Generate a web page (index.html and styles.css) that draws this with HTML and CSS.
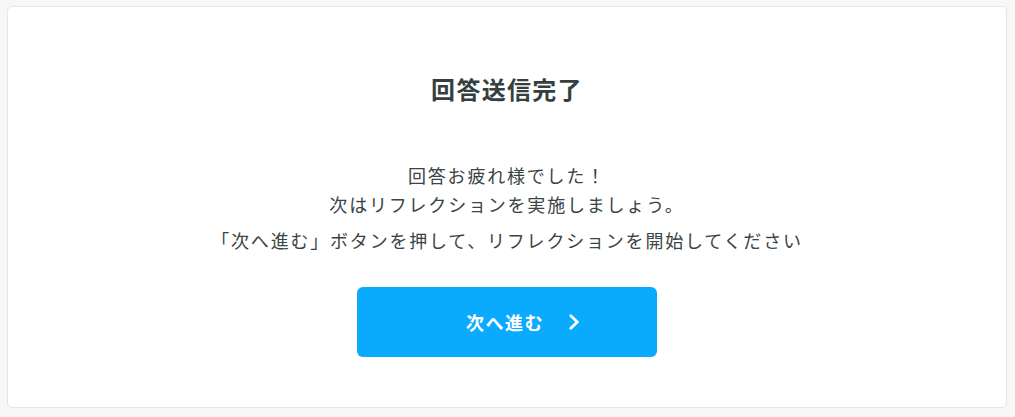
FILE: index.html
```html
<!DOCTYPE html>
<html lang="ja">
<head>
<meta charset="utf-8">
<link rel="stylesheet" href="styles.css">
</head>
<body>
<main class="card">
  <h1 class="title">回答送信完了</h1>
  <div class="message">
    <p class="lead">回答お疲れ様でした！<br>次はリフレクションを実施しましょう。</p>
    <p class="note">「次へ進む」ボタンを押して、リフレクションを開始してください</p>
  </div>
  <button class="next" type="button">
    <span class="label">次へ進む</span>
    <svg class="chev" width="12" height="16" viewBox="0 0 12 16" aria-hidden="true"><path d="M2.8 1.8 L9.3 8 L2.8 14.2" fill="none" stroke="#fff" stroke-width="2.8" stroke-linecap="round" stroke-linejoin="round"/></svg>
  </button>
</main>
</body>
</html>
```
FILE: styles.css
```css
html, body {
  margin: 0;
  padding: 0;
  background: #f6f7f7;
}
body {
  padding: 6px 8px 9px 7px;
  font-family: "Noto Sans CJK JP", "Noto Sans", sans-serif;
  color: #3a4444;
}
.card {
  box-sizing: border-box;
  height: 402px;
  background: #fff;
  border: 1px solid #e4e7e7;
  border-radius: 5px;
  display: flex;
  flex-direction: column;
  align-items: center;
  padding-top: 67px;
}
.title {
  margin: 0;
  font-size: 24px;
  font-weight: 700;
  letter-spacing: 1.3px;
  line-height: 30px;
  color: #363f3f;
}
.message {
  margin-top: 57px;
  text-align: center;
  font-size: 18px;
  letter-spacing: 1.8px;
}
.lead {
  margin: 0;
  line-height: 29px;
}
.note {
  margin: 7px 0 0;
  line-height: 29px;
}
.next {
  margin-top: 32px;
  width: 300px;
  height: 70px;
  border: 0;
  border-radius: 6px;
  background: #0aabff;
  color: #fff;
  font-family: inherit;
  font-size: 18px;
  font-weight: 700;
  letter-spacing: 1.5px;
  display: flex;
  align-items: center;
  justify-content: center;
  gap: 24px;
  padding: 0 0 0 32px;
}
.chev { display: block; }
```
